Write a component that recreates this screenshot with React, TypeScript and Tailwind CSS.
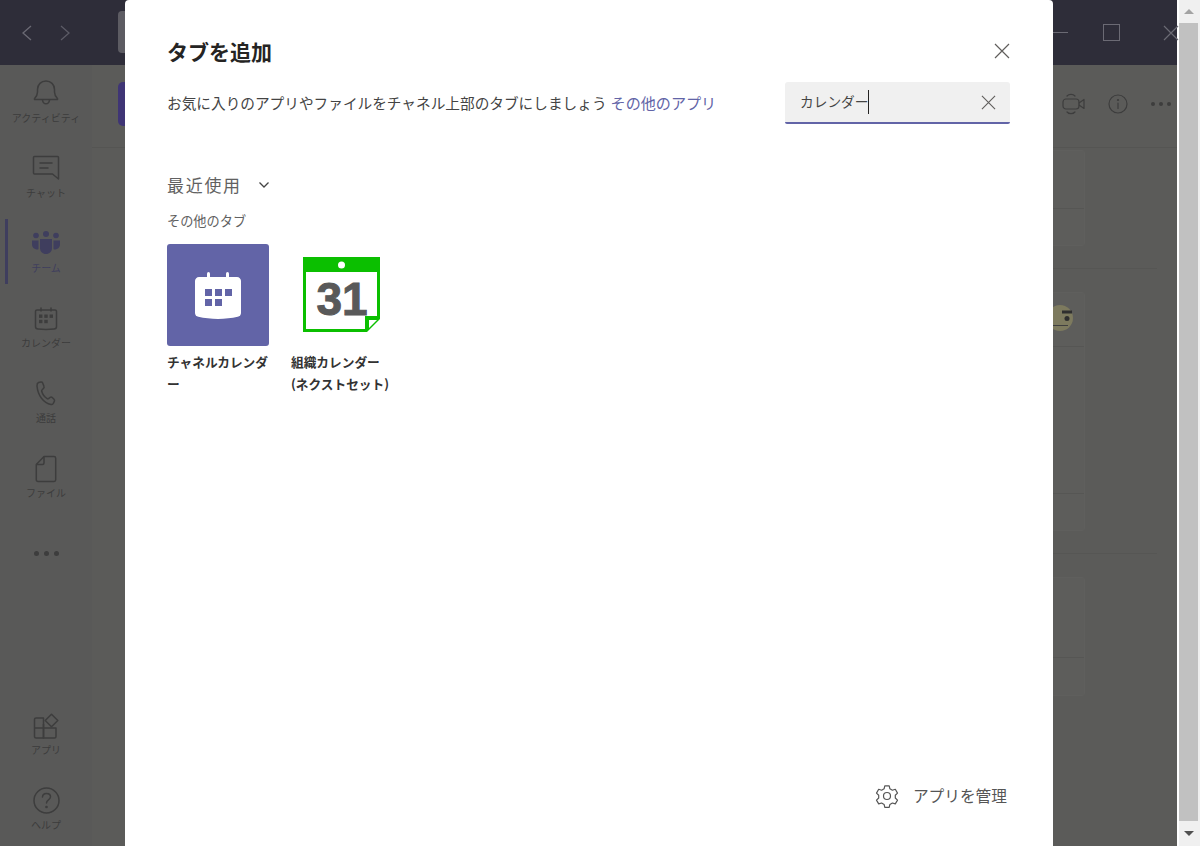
import React from 'react';

const stroke = '#3d3d3d';

function Bell() {
  return (
    <svg width="26" height="28" viewBox="0 0 26 28" fill="none" stroke={stroke} strokeWidth="1.5" strokeLinecap="round" strokeLinejoin="round">
      <path d="M2 20.5h22c.6 0 .8-.6.4-1-2-2.200-2.900-3.500-2.900-6.500V10.500C21.500 5.500 17.800 2 13 2S4.500 5.500 4.500 10.500V13c0 3-.9 4.300-2.900 6.500-.4.4-.2 1 .4 1z" />
      <path d="M9.500 21c.3 2.500 1.700 3.800 3.500 3.800s3.200-1.300 3.500-3.800" />
    </svg>
  );
}

function Chat() {
  return (
    <svg width="28" height="26" viewBox="0 0 28 26" fill="none" stroke={stroke} strokeWidth="1.5" strokeLinecap="round" strokeLinejoin="round">
      <path d="M2.500 1.500h23c.6 0 1 .4 1 1v21.500l-6-5H2.500c-.6 0-1-.4-1-1v-15.500c0-.6.4-1 1-1z" />
      <path d="M8 8h12M8 13h8" />
    </svg>
  );
}

function Team() {
  return (
    <svg width="28" height="24" viewBox="0 0 28 24" fill="#3f3e5e">
      <circle cx="4" cy="4.500" r="2.800" />
      <circle cx="14" cy="3" r="3" />
      <circle cx="24" cy="4.500" r="2.800" />
      <path d="M0 9.500h6.500V17a4 4 0 0 1-.3 1.500C2.500 18.500 0 16.500 0 13.500z" />
      <path d="M28 9.500h-6.500V17c0 .5.100 1 .3 1.500 3.700 0 6.200-2 6.200-5z" />
      <path d="M8 8h12v9c0 3.500-2.500 6-6 6s-6-2.500-6-6z" />
    </svg>
  );
}

function Calendar() {
  return (
    <svg width="24" height="24" viewBox="0 0 24 24" fill="none" stroke={stroke} strokeWidth="1.5" strokeLinecap="round">
      <path d="M3 3h18c1 0 1.500.6 1.500 1.500v15c0 1.500-1 2.500-2.500 2.500-5 .5-11 .5-16 0-1.500 0-2.500-1-2.500-2.500v-15C1.500 3.600 2 3 3 3z" />
      <path d="M7 1v3M17 1v3" />
      <g fill="#3d3d3d" stroke="none">
        <rect x="5" y="7.500" width="3.400" height="3.400" />
        <rect x="10.300" y="7.500" width="3.400" height="3.400" />
        <rect x="15.600" y="7.500" width="3.400" height="3.400" />
        <rect x="5" y="12.800" width="3.400" height="3.400" />
        <rect x="10.300" y="12.800" width="3.400" height="3.400" />
      </g>
    </svg>
  );
}

function Phone() {
  return (
    <svg width="20" height="25" viewBox="0 0 20 25" fill="none" stroke={stroke} strokeWidth="1.5" strokeLinejoin="round">
      <path d="M2.500 1.500 5 1c.8-.1 1.400.3 1.700 1l1.300 3.500c.3.700.1 1.300-.4 1.800L6 9c-.4.400-.4.800-.3 1.300.8 3 2.800 5.800 5.500 7.400.5.300.9.200 1.300-.1l1.700-1.300c.6-.4 1.200-.4 1.800 0l2 2c.6.600.7 1.300.3 2l-1 2c-.5.900-1.300 1.300-2.300 1.100C7.500 22 1.800 14.500 1 5c-.1-1.800.3-3 1.500-3.500z" />
    </svg>
  );
}

function FileIcon() {
  return (
    <svg width="22" height="28" viewBox="0 0 22 28" fill="none" stroke={stroke} strokeWidth="1.5" strokeLinejoin="round">
      <path d="M9 1.500h10c1 0 1.700.7 1.700 1.700v21.600c0 1-.7 1.700-1.700 1.700H3c-1 0-1.700-.7-1.700-1.700V9.500z" />
      <path d="M9 1.500v6.500c0 1-.6 1.500-1.500 1.500H1.300" />
    </svg>
  );
}

function Apps() {
  return (
    <svg width="26" height="26" viewBox="0 0 26 26" fill="none" stroke={stroke} strokeWidth="1.500" strokeLinejoin="round">
      <path d="M3 5h7.500v20H3c-1 0-1.500-.5-1.500-1.500v-17C1.500 5.500 2 5 3 5z" />
      <path d="M1.500 15h21.500v8.500c0 1-.5 1.500-1.500 1.500H10.500v-14" />
      <path d="M18.500 1.200 24.800 7.500 18.500 13.800 12.200 7.500z" />
    </svg>
  );
}

function Help() {
  return (
    <svg width="27" height="27" viewBox="0 0 27 27" fill="none" stroke={stroke} strokeWidth="1.500" strokeLinecap="round">
      <circle cx="13.500" cy="13.500" r="12.500" />
      <path d="M9.500 10c.2-2.300 1.800-3.500 4-3.500 2.300 0 4 1.400 4 3.300 0 3-4 3.200-4 6.200" />
      <circle cx="13.500" cy="20" r=".6" fill="#3d3d3d" />
    </svg>
  );
}

function NavItem({ icon, label, active }: { icon: React.ReactNode; label: string; active?: boolean }) {
  return (
    <div className="relative h-[75.2px] flex flex-col items-center pt-[14px]">
      {active && <div className="absolute left-[5px] top-[4px] h-[65px] w-[3px] bg-[#3f3e5e]" />}
      <div className="h-[28px] flex items-center justify-center">{icon}</div>
      <div className={`text-[10px] leading-[14px] mt-[3.500px] whitespace-nowrap ${active ? 'text-[#3f3e5e]' : 'text-[#3c3c3c]'}`}>{label}</div>
    </div>
  );
}

function CloseIcon({ size = 16 }: { size?: number }) {
  return (
    <svg width={size} height={size} viewBox="0 0 16 16" fill="none" stroke="#605e5c" strokeWidth="1.200">
      <path d="M1 1l14 14M15 1L1 15" />
    </svg>
  );
}

function ChannelCalendarTile() {
  return (
    <div className="w-[102px] h-[102px] rounded-[3px] bg-[#6264a7] flex items-center justify-center">
      <svg width="46" height="47" viewBox="0 0 46 47" fill="#fff">
        <path d="M4 5h38c2.200 0 4 1.800 4 4v32c0 2-1.300 3.300-3.300 3.800-12 2.800-27.400 2.800-39.400 0C1.300 44.300 0 43 0 41V9c0-2.200 1.800-4 4-4z" />
        <rect x="12" y="0" width="3" height="8" rx="1.500" />
        <rect x="31" y="0" width="3" height="8" rx="1.500" />
        <g fill="#6264a7">
          <rect x="10" y="17" width="7" height="7" />
          <rect x="20" y="17" width="7" height="7" />
          <rect x="30" y="17" width="7" height="7" />
          <rect x="10" y="27" width="7" height="7" />
          <rect x="20" y="27" width="7" height="7" />
        </g>
      </svg>
    </div>
  );
}

function OrgCalendarTile() {
  return (
    <svg width="78" height="76" viewBox="0 0 78 76">
      <path d="M0 0h77v62L64 75H0z" fill="#0bbf00" />
      <path d="M3 15h71v44H62v13H3z" fill="#fff" />
      <circle cx="38.500" cy="8" r="3.500" fill="#fff" />
      <path d="M66 63h8L66 71z" fill="#fff" />
      <text x="39" y="58" textAnchor="middle" fontFamily="'Liberation Sans', sans-serif" fontWeight="700" fontSize="46" fill="#595959" stroke="#595959" strokeWidth="1">31</text>
    </svg>
  );
}

function MessageCard({ top, height, dividers }: { top: number; height: number; dividers: number[] }) {
  return (
    <div style={{ marginTop: top, height }} className="w-[960px] border border-[#5f5f5d] bg-[#5d5d5b] rounded-[3px] shrink-0 relative">
      {dividers.map(d => (
        <div key={d} style={{ top: d }} className="absolute left-0 right-0 border-t border-[#565654]" />
      ))}
    </div>
  );
}

export default function App() {
  return (
    <div className="w-[1200px] h-[846px] flex overflow-hidden bg-white font-['Noto_Sans_CJK_JP','Noto_Sans',sans-serif]">
      <div className="relative w-[1177px] h-full flex flex-col">
        {/* title bar */}
        <div className="h-[65px] bg-[#2e2d39] flex items-center relative shrink-0">
          <svg className="ml-[21px]" width="12" height="16" viewBox="0 0 12 16" fill="none" stroke="#6b6a74" strokeWidth="1.300"><path d="M10 1L2 8l8 7" /></svg>
          <svg className="ml-[26px]" width="12" height="16" viewBox="0 0 12 16" fill="none" stroke="#5c5b66" strokeWidth="1.300"><path d="M2 1l8 7-8 7" /></svg>
          <div className="ml-[47px] w-[300px] h-[42px] rounded-[4px] bg-[#5d5c63] self-start mt-[11px]" />
          <div className="ml-auto flex items-center mr-[-2px]">
            <div className="w-[16px] border-t border-[#6b6a74] mr-[35px]" />
            <div className="w-[17px] h-[17px] border border-[#6b6a74] mr-[43px]" />
            <svg width="16" height="16" viewBox="0 0 16 16" fill="none" stroke="#6b6a74" strokeWidth="1.200"><path d="M1 1l14 14M15 1L1 15" /></svg>
          </div>
        </div>

        <div className="flex flex-1 min-h-0">
          {/* left rail */}
          <nav className="w-[92px] bg-[#595958] flex flex-col shrink-0 h-full">
            <NavItem icon={<Bell />} label="アクティビティ" />
            <NavItem icon={<Chat />} label="チャット" />
            <NavItem icon={<Team />} label="チーム" active />
            <NavItem icon={<Calendar />} label="カレンダー" />
            <NavItem icon={<Phone />} label="通話" />
            <NavItem icon={<FileIcon />} label="ファイル" />
            <div className="flex justify-center gap-[5px] mt-[35px]">
              <span className="w-[5px] h-[5px] rounded-full bg-[#3d3d3d]" />
              <span className="w-[5px] h-[5px] rounded-full bg-[#3d3d3d]" />
              <span className="w-[5px] h-[5px] rounded-full bg-[#3d3d3d]" />
            </div>
            <div className="mt-auto mb-[-2px]">
              <NavItem icon={<Apps />} label="アプリ" />
              <NavItem icon={<Help />} label="ヘルプ" />
            </div>
          </nav>

          {/* channel behind the dialog */}
          <div className="flex-1 min-w-0 bg-[#5b5b59] flex flex-col overflow-hidden">
            <div className="h-[83px] shrink-0 border-b border-[#555553] flex items-center pl-[26px] pr-[6px]">
              <div className="w-[20px] h-[44px] rounded-[5px] bg-[#3f3575] -mt-[4px]" />
              <div className="ml-auto flex items-center -mt-[4px]">
                <svg width="24" height="24" viewBox="0 0 24 24" fill="none" stroke="#3d3d3d" strokeWidth="1.200" strokeLinecap="round" strokeLinejoin="round">
                  <rect x="1" y="7" width="16" height="10" rx="3" />
                  <path d="M17 11l5-3.500v9L17 13" />
                  <path d="M5 4c2-2.200 6-2.200 8 0M5 20c2 2.200 6 2.200 8 0" />
                </svg>
                <svg className="ml-[22px]" width="20" height="20" viewBox="0 0 20 20" fill="none" stroke="#3d3d3d" strokeWidth="1.200" strokeLinecap="round">
                  <circle cx="10" cy="10" r="9" />
                  <path d="M10 9v5.500" />
                  <circle cx="10" cy="6" r=".5" fill="#3d3d3d" />
                </svg>
                <div className="ml-[23px] flex gap-[4px]">
                  <span className="w-[4px] h-[4px] rounded-full bg-[#3d3d3d]" />
                  <span className="w-[4px] h-[4px] rounded-full bg-[#3d3d3d]" />
                  <span className="w-[4px] h-[4px] rounded-full bg-[#3d3d3d]" />
                </div>
              </div>
            </div>
            <div className="pl-[33px] flex flex-col">
              <MessageCard top={2} height={96} dividers={[57]} />
              <div className="w-[1032px] border-t border-[#565654] mt-[22px] shrink-0" />
              <div className="relative">
                <MessageCard top={23} height={239} dividers={[53, 200]} />
                <svg className="absolute left-[922px] top-[36px]" width="26" height="26" viewBox="0 0 26 26">
                  <circle cx="13" cy="13" r="13" fill="#7d7a5e" />
                  <path d="M15 5.500h10v3H15z" fill="#2f2f2f" />
                  <circle cx="20" cy="13.500" r="2.500" fill="#2f2f2f" />
                  <path d="M5 20.500h16" stroke="#3f3f3f" strokeWidth="1" />
                </svg>
              </div>
              <div className="w-[1032px] border-t border-[#565654] mt-[22px] shrink-0" />
              <MessageCard top={23} height={119} dividers={[79]} />
            </div>
          </div>
        </div>

        {/* add a tab dialog */}
        <div className="absolute left-[125px] top-0 w-[928px] h-[846px] bg-white rounded-t-[4px] flex flex-col pl-[42px] pr-[43px] text-[#252423]">
          <div className="flex items-center justify-between h-[38px] mt-[32px]">
            <h1 className="text-[21px] font-bold leading-[38px]">タブを追加</h1>
            <button><CloseIcon /></button>
          </div>
          <div className="flex items-center justify-between mt-[12px] h-[42px]">
            <p className="text-[14.67px] whitespace-nowrap pb-[2px]">
              <span className="text-[#444]">お気に入りのアプリやファイルをチャネル上部のタブにしましょう</span>
              <span className="text-[#6264a7] text-[15.100px] ml-[4px]">その他のアプリ</span>
            </p>
            <div className="w-[225px] h-[42px] bg-[#f0f0f0] rounded-t-[3px] border-b-2 border-[#6264a7] rounded-b-[2px] flex items-center pl-[15px] pr-[14px]">
              <span className="text-[13.700px] text-[#444] whitespace-nowrap pb-[2px]">カレンダー</span>
              <span className="w-px h-[24px] bg-[#252423]" />
              <span className="ml-auto flex"><CloseIcon size={15} /></span>
            </div>
          </div>
          <div className="flex items-center mt-[48px] h-[26px] text-[#616161]">
            <span className="text-[17px] tracking-[1.700px]">最近使用</span>
            <svg className="ml-[16px]" width="12" height="8" viewBox="0 0 12 8" fill="none" stroke="#444" strokeWidth="1.300"><path d="M1.500 1.500L6 6l4.500-4.500" /></svg>
          </div>
          <div className="text-[13.2px] text-[#616161] mt-[13px] h-[20px] leading-[20px]">その他のタブ</div>
          <div className="flex mt-[13px]">
            <div className="w-[124px] shrink-0">
              <ChannelCalendarTile />
              <div className="text-[12.700px] font-bold leading-[22px] mt-[5px] whitespace-nowrap text-[#333]">チャネルカレンダ<br />ー</div>
            </div>
            <div className="w-[110px] shrink-0">
              <div className="h-[102px] pl-[12px] pt-[13px]"><OrgCalendarTile /></div>
              <div className="text-[12.700px] font-bold leading-[22px] mt-[5px] whitespace-nowrap text-[#333]">組織カレンダー<br />(ネクストセット)</div>
            </div>
          </div>
          <div className="mt-auto mb-[36px] flex justify-end items-center h-[28px] pr-[3px]">
            <svg width="24" height="24" viewBox="0 0 24 24" fill="none" stroke="#555" strokeWidth="1.200" strokeLinejoin="round">
              <path d="M9.800 1.800h4.400l.7 3 2.500 1.400 2.900-.9 2.200 3.800-2.200 2.100v2.800l2.200 2.100-2.200 3.800-2.900-.9-2.500 1.400-.7 3H9.800l-.7-3-2.500-1.400-2.900.9-2.200-3.800 2.200-2.100v-2.800L1.500 9.100l2.200-3.800 2.900.9 2.500-1.400z" />
              <circle cx="12" cy="12" r="3.500" />
            </svg>
            <span className="ml-[14px] text-[15.700px] text-[#555] whitespace-nowrap">アプリを管理</span>
          </div>
        </div>
      </div>

      {/* scrollbar */}
      <div className="w-[23px] h-full bg-[#f0f0f0] border-l-2 border-white flex flex-col items-center pr-[2px]">
        <div className="h-[23px] flex items-center justify-center">
          <div className="w-0 h-0 border-x-[5px] border-x-transparent border-b-[5px] border-b-[#a3a3a3]" />
        </div>
        <div className="flex-1 w-full bg-[#c1c1c1]" />
        <div className="h-[25px] flex items-center justify-center">
          <div className="w-0 h-0 border-x-[5px] border-x-transparent border-t-[5px] border-t-[#505050]" />
        </div>
      </div>
    </div>
  );
}
